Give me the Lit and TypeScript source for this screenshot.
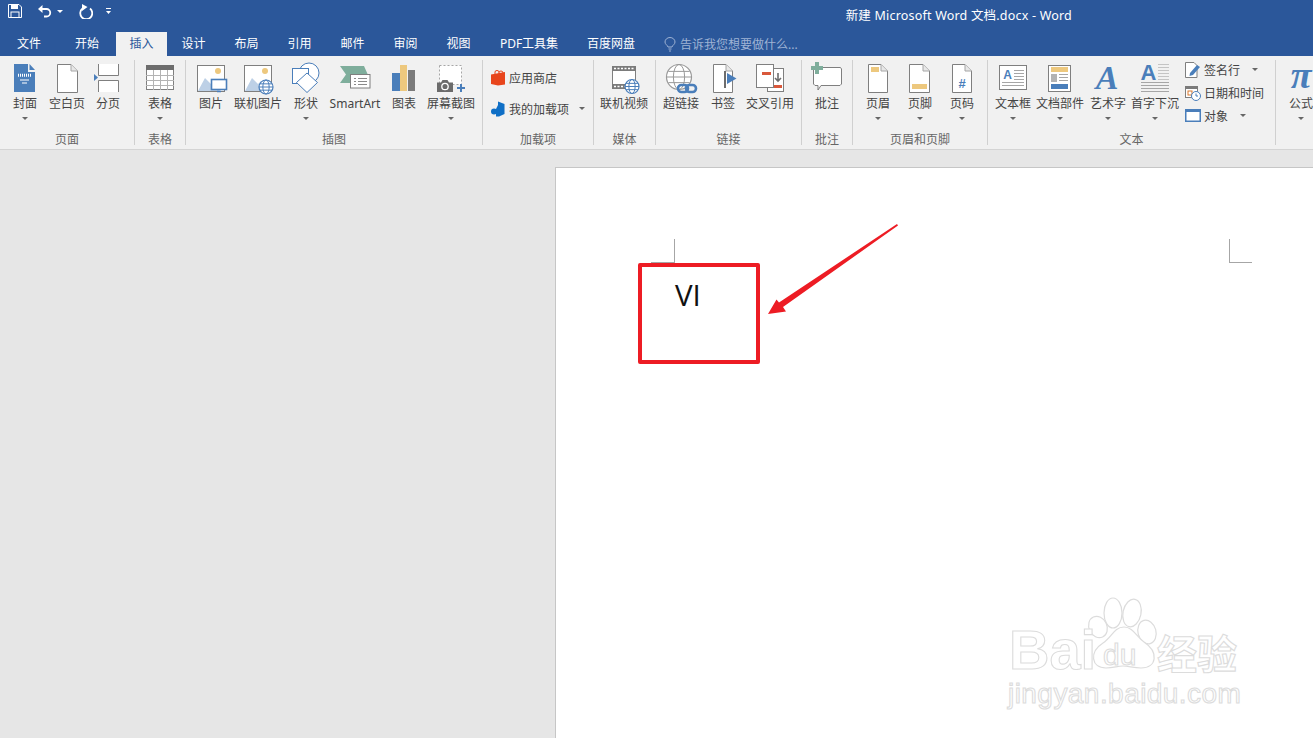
import { LitElement, html, css, svg } from "lit";
import { customElement } from "lit/decorators.js";

const BLUE = "#4a7eba";
const GRAY = "#7f7f7f";
const YEL = "#edc87e";
const GREEN = "#7fae9c";
const RED = "#d9583b";

const doc = (x: number, w: number, fill = "#fff") => svg`
  <path d="M${x + .5} 4.5H${x + w - 7}L${x + w - .5} 11V32.5H${x + .5}Z" fill="${fill}" stroke="${GRAY}"/>
  <path d="M${x + w - 7} 4.5V11H${x + w - .5}" fill="#e8e8e8" stroke="#a6a6a6"/>`;

const globe = (cx: number, cy: number, r: number, c = BLUE) => svg`
  <circle cx="${cx}" cy="${cy}" r="${r}" fill="#fff" stroke="${c}" stroke-width="1.2"/>
  <ellipse cx="${cx}" cy="${cy}" rx="${r * .45}" ry="${r}" fill="none" stroke="${c}"/>
  <path d="M${cx - r} ${cy}H${cx + r}M${cx - r * .85} ${cy - r * .45}H${cx + r * .85}M${cx - r * .85} ${cy + r * .45}H${cx + r * .85}" stroke="${c}" fill="none"/>`;

const picture = svg`
  <rect x="8.5" y="5.5" width="27" height="26" fill="#fff" stroke="${GRAY}"/>
  <circle cx="29" cy="11" r="3" fill="${YEL}"/>
  <path d="M9 31L16 18L22 24L25 21L31 31Z" fill="#bdd0e6"/>`;

const lines = (x1: number, x2: number, ys: number[], c = "#a6a6a6") =>
  svg`<path d="${ys.map((y) => `M${x1} ${y + .5}H${x2}`).join("")}" stroke="${c}" fill="none"/>`;

const ICONS: Record<string, unknown> = {
  cover: svg`<path d="M11 4H25V12H32V32H11Z" fill="${BLUE}"/><path d="M26.5 4L32 10H26.5Z" fill="${BLUE}"/>
    <path d="M15 14.5H28M15 16H28" stroke="#fff" stroke-dasharray="1 1" stroke-width="1.4"/>
    <path d="M17 20H26M19 23H24" stroke="#fff"/>`,
  blank: doc(12, 21),
  pagebreak: svg`<path d="M12.5 4V15.5H32.5V4M12.5 32V20.5H32.5V32" fill="#fff" stroke="${GRAY}"/>
    <path d="M8 14L12 17.5L8 21Z" fill="${BLUE}"/>`,
  table: svg`<rect x="8.5" y="5.5" width="27" height="24" fill="#fff" stroke="${GRAY}"/>
    <rect x="8" y="5" width="28" height="5" fill="#6d6d6d"/>
    <path d="M8 15.5H36M8 20.5H36M8 25.5H36M15.5 10V30M22.5 10V30M29.5 10V30" stroke="#b3b3b3" fill="none"/>`,
  picture: svg`${picture}
    <rect x="22.5" y="19.5" width="15" height="10" fill="#fff" stroke="${BLUE}" stroke-width="1.6"/>
    <path d="M28 31.5H32" stroke="${BLUE}" stroke-width="1.5"/>`,
  online: svg`${picture}${globe(30, 27, 7)}`,
  shapes: svg`<circle cx="25" cy="13" r="10" fill="#fff" stroke="${BLUE}"/>
    <rect x="8.5" y="8.5" width="16" height="15" fill="#fff" stroke="${BLUE}"/>
    <path d="M23 13L33.5 22.5L23 32.5L12.5 22.5Z" fill="#fff" stroke="${BLUE}"/>`,
  smartart: svg`<path d="M7 6H31L35 15V23H7L13 14.5Z" fill="${GREEN}"/>
    <rect x="17.5" y="14.5" width="19.5" height="13.5" fill="#fff" stroke="${GRAY}"/>
    <path d="M21 18.5H23M25 18.5H34M21 21.5H23M25 21.5H34M21 24.5H23M25 24.5H34" stroke="#8a8a8a"/>`,
  chart: svg`<rect x="10" y="13" width="8" height="18" fill="${BLUE}"/>
    <rect x="18" y="5" width="7" height="26" fill="${YEL}"/>
    <rect x="26" y="10" width="7" height="21" fill="#7b7b7b"/>`,
  screenshot: svg`<rect x="10.5" y="5.5" width="22" height="19" fill="#fff" stroke="#a6a6a6" stroke-dasharray="2 2"/>
    <path d="M8 22.5H12L13.5 20H18.5L20 22.5H24V32H8Z" fill="#6b6b6b"/>
    <circle cx="16" cy="26.5" r="3.2" fill="#6b6b6b" stroke="#fff" stroke-width="1.3"/>
    <path d="M28 28H36M32 24V32" stroke="${BLUE}" stroke-width="2"/>`,
  video: svg`<rect x="10.5" y="6.5" width="23" height="22" fill="#fff" stroke="${GRAY}"/>
    <rect x="10" y="6" width="24" height="5" fill="#7b7b7b"/><rect x="10" y="24" width="14" height="5" fill="#7b7b7b"/>
    <path d="M12 8.5H33M12 26.5H24" stroke="#fff" stroke-dasharray="2 1.5" stroke-width="1.5"/>${globe(30, 26.5, 7)}`,
  link: svg`${globe(20, 17, 12.5, "#999")}
    <rect x="19" y="25" width="10" height="7" rx="3.5" fill="none" stroke="${BLUE}" stroke-width="2.6"/>
    <rect x="27" y="25" width="10" height="7" rx="3.5" fill="none" stroke="${BLUE}" stroke-width="2.6"/>`,
  bookmark: svg`${doc(12, 20)}<rect x="23" y="11" width="2" height="17" fill="#6d6d6d"/>
    <path d="M26 13L35.5 18.5L26 24Z" fill="${BLUE}"/>`,
  crossref: svg`<rect x="19.5" y="8.5" width="16" height="23" fill="#fff" stroke="${GRAY}"/>
    <rect x="8.5" y="4.5" width="17" height="23" fill="#fff" stroke="${GRAY}"/>
    <rect x="14" y="12" width="9" height="3" fill="${RED}"/><rect x="26" y="25" width="8" height="3" fill="${RED}"/>
    <path d="M30 13V20M27 18L30 21L33 18" fill="none" stroke="#6d6d6d" stroke-width="1.6"/>`,
  comment: svg`<path d="M9.5 7.5H35.5L36.5 9V24L35 25.5H16L13 30V25.5H10L8.5 24V9Z" fill="#fff" stroke="${GRAY}"/>
    <path d="M10 2H14V6H18V10H14V14H10V10H6V6H10Z" fill="${GREEN}"/>`,
  header: svg`${doc(12, 20)}<rect x="15" y="7" width="8" height="5" fill="${YEL}"/>`,
  footer: svg`${doc(11, 21)}<rect x="14" y="24" width="15" height="5" fill="${YEL}"/>`,
  pagenum: svg`${doc(12, 20)}<text x="22" y="28" text-anchor="middle" font-size="13" font-weight="700" font-family="Liberation Sans" fill="${BLUE}">#</text>`,
  textbox: svg`<rect x="8.5" y="5.5" width="27" height="24" fill="#fff" stroke="${GRAY}"/>
    <text x="16.5" y="19" text-anchor="middle" font-size="12" font-weight="700" font-family="Liberation Sans" fill="${BLUE}">A</text>
    ${lines(23, 33, [10, 13, 16, 19])}${lines(11, 33, [22, 25])}`,
  parts: svg`<rect x="10.5" y="5.5" width="22" height="26" fill="#fff" stroke="${GRAY}"/>
    <rect x="13" y="7" width="17" height="5" fill="${YEL}"/><rect x="13" y="14" width="6" height="8" fill="#b3b3b3"/>
    ${lines(21, 30, [14, 17, 20])}<rect x="13" y="24" width="17" height="5" fill="${BLUE}"/>`,
  wordart: svg`<text x="21" y="29" text-anchor="middle" font-size="34" font-weight="700" font-style="italic" font-family="Liberation Serif" fill="${BLUE}">A</text>`,
  dropcap: svg`<text x="15.5" y="20" text-anchor="middle" font-size="22" font-weight="700" font-family="Liberation Sans" fill="${BLUE}">A</text>
    ${lines(25, 36, [4, 7, 10, 13, 16, 19], "#c4c4c4")}${lines(8, 36, [22, 25, 28, 31], "#a6a6a6")}`,
  pi: svg`<text x="22" y="28" text-anchor="middle" font-size="38" font-weight="700" font-style="italic" font-family="Liberation Serif" fill="${BLUE}">π</text>`,
};

const SMALL: Record<string, unknown> = {
  store: svg`<path d="M0 4.5L14 2V14.5L7 15.5L0 14Z" fill="#e8451c"/><path d="M4 4V2Q4 .5 6 .5T8 2V4M8 2.5Q8 1 10 1T12 3" fill="none" stroke="#e8451c"/>`,
  addin: svg`<path d="M7 .5L13.5 3V13L8 15.5H5V8L7 4Z" fill="#0f6fc6"/><circle cx="3" cy="10.5" r="3" fill="#0f6fc6"/>`,
  sign: svg`<path d="M.5 .5H9L12 3.5V15.5H.5Z" fill="#fff" stroke="${GRAY}"/><path d="M5 11L12 3L15 5L8 13L4.5 14Z" fill="${BLUE}"/>`,
  date: svg`<rect x=".5" y="1.5" width="12" height="11" fill="#fff" stroke="${GRAY}"/><rect x="0" y="1" width="13" height="3" fill="#7b7b7b"/>
    <rect x="3" y="6" width="4" height="4" fill="#fff" stroke="#d9782d"/><circle cx="11" cy="11" r="4.5" fill="#fff" stroke="${BLUE}"/><path d="M11 8.5V11H13" fill="none" stroke="${BLUE}"/>`,
  object: svg`<rect x=".75" y="1.75" width="14.5" height="11.5" fill="#fff" stroke="${BLUE}" stroke-width="1.5"/><rect x="0" y="1" width="16" height="3" fill="${BLUE}"/>`,
};

interface Btn { label: string; icon: string; w: number; caret?: boolean }
interface Small { label: string; icon: string; caret?: boolean; gap?: number }
interface Group { label: string; w: number; pad: number; btns: Btn[]; small?: Small[]; smallPad?: number; smallTop?: number; rowH?: number; iconGap?: number }

const GROUPS: Group[] = [
  { label: "页面", w: 135, pad: 4, btns: [
    { label: "封面", icon: "cover", w: 42, caret: true },
    { label: "空白页", icon: "blank", w: 42 },
    { label: "分页", icon: "pagebreak", w: 40 } ] },
  { label: "表格", w: 51, pad: 1, btns: [{ label: "表格", icon: "table", w: 48, caret: true }] },
  { label: "插图", w: 297, pad: 4, btns: [
    { label: "图片", icon: "picture", w: 42 },
    { label: "联机图片", icon: "online", w: 52 },
    { label: "形状", icon: "shapes", w: 44, caret: true },
    { label: "SmartArt", icon: "smartart", w: 54 },
    { label: "图表", icon: "chart", w: 44 },
    { label: "屏幕截图", icon: "screenshot", w: 50, caret: true } ] },
  { label: "加载项", w: 111, pad: 8, btns: [], rowH: 31, smallPad: 0, smallTop: 2, iconGap: 2, small: [
    { label: "应用商店", icon: "store" },
    { label: "我的加载项", icon: "addin", caret: true, gap: 10 } ] },
  { label: "媒体", w: 62, pad: 2, btns: [{ label: "联机视频", icon: "video", w: 56 }] },
  { label: "链接", w: 146, pad: 2, btns: [
    { label: "超链接", icon: "link", w: 46 },
    { label: "书签", icon: "bookmark", w: 38 },
    { label: "交叉引用", icon: "crossref", w: 56 } ] },
  { label: "批注", w: 51, pad: 2, btns: [{ label: "批注", icon: "comment", w: 46 }] },
  { label: "页眉和页脚", w: 135, pad: 4, btns: [
    { label: "页眉", icon: "header", w: 42, caret: true },
    { label: "页脚", icon: "footer", w: 42, caret: true },
    { label: "页码", icon: "pagenum", w: 42, caret: true } ] },
  { label: "文本", w: 288, pad: 2, btns: [
    { label: "文本框", icon: "textbox", w: 46, caret: true },
    { label: "文档部件", icon: "parts", w: 48, caret: true },
    { label: "艺术字", icon: "wordart", w: 48, caret: true },
    { label: "首字下沉", icon: "dropcap", w: 46, caret: true } ],
    rowH: 23, smallPad: 7, smallTop: -2, iconGap: 3, small: [
    { label: "签名行", icon: "sign", caret: true, gap: 12 },
    { label: "日期和时间", icon: "date" },
    { label: "对象", icon: "object", caret: true, gap: 12 } ] },
  { label: "", w: 60, pad: 0, btns: [{ label: "公式", icon: "pi", w: 50, caret: true }] },
];

const TABS = [
  { t: "文件", w: 58 }, { t: "开始", w: 58 }, { t: "插入", w: 51, on: true }, { t: "设计", w: 53 },
  { t: "布局", w: 53 }, { t: "引用", w: 53 }, { t: "邮件", w: 53 }, { t: "审阅", w: 53 },
  { t: "视图", w: 53 }, { t: "PDF工具集", w: 88 }, { t: "百度网盘", w: 76 },
];

@customElement("app-root")
export class AppRoot extends LitElement {
  static styles = css`
    :host {
      width: 1313px; height: 738px; overflow: hidden; background: #e6e6e6;
      font-family: "Noto Sans", "Noto Sans CJK SC", sans-serif; font-size: 12px; color: #444;
      display: flex; flex-direction: column;
    }
    .title { flex: none; height: 32px; background: #2b579a; color: #fff; display: flex; align-items: flex-start; }
    .qat { display: flex; align-items: center; padding: 4px 0 0 8px; height: 14px; }
    .qat svg { display: block; }
    .qat .undo { margin-left: 15px; }
    .qat .dd { margin-left: 5px; }
    .qat .redo { margin-left: 15px; }
    .qat .cust { margin-left: 12px; }
    .doc-title { margin-left: auto; margin-right: 241px; padding-top: 7px; line-height: 18px; font-size: 12.5px; letter-spacing: .2px; white-space: nowrap; }
    .tabs { flex: none; height: 24px; background: #2b579a; color: #fff; display: flex; align-items: stretch; }
    .tab { flex: none; display: flex; align-items: center; justify-content: center; line-height: 1; white-space: nowrap; box-sizing: border-box; }
    .tab.on { background: #f1f1f1; color: #2b579a; }
    .tell { display: flex; align-items: center; gap: 4px; margin-left: 15px; color: #9fb3d4; }
    .ribbon { flex: none; height: 94px; box-sizing: border-box; background: #f1f1f1; border-bottom: 1px solid #d4d4d4; display: flex; padding-top: 4px; }
    .group { flex: none; box-sizing: border-box; height: 85px; border-right: 1px solid #d0d0d0; display: flex; flex-direction: column; }
    .group.last { border-right: 0; }
    .items { flex: 1; display: flex; align-items: flex-start; min-height: 0; }
    .btn { flex: none; display: flex; flex-direction: column; align-items: center; }
    .btn svg { flex: none; display: block; }
    .btn .lb { line-height: 16px; height: 16px; margin-top: 2px; white-space: nowrap; }
    .caret { width: 0; height: 0; border: 3px solid transparent; border-top: 3px solid #666; border-bottom: 0; }
    .btn .caret { margin-top: 5px; }
    .smalls { flex: none; display: flex; flex-direction: column; }
    .sm { display: flex; align-items: center; white-space: nowrap; }
    .sm svg { flex: none; width: 16px; height: 16px; display: block; }
    .sm .caret { flex: none; }
    .glabel { flex: none; height: 16px; line-height: 16px; text-align: center; color: #666; margin-bottom: -3px; }
    .work { flex: 1; min-height: 0; display: flex; padding: 17px 0 0 555px; }
    .page { flex: 1; background: #fff; border: 1px solid #c6c6c6; border-width: 1px 0 0 1px; position: relative; }
    .mark { position: absolute; background: #a6a6a6; }
    .vl { width: 1px; height: 24px; top: 71px; }
    .hl { height: 1px; width: 23px; top: 94px; }
    .vi { position: absolute; left: 119px; top: 105px; font: 29.5px/44px "Open Sans", sans-serif; color: #111; }
    .redbox { position: absolute; left: 82px; top: 95px; width: 122px; height: 101px; box-sizing: border-box; border: 4.5px solid #ed1c24; border-radius: 2px; }
    .arrow { position: absolute; left: 0; top: 0; overflow: visible; pointer-events: none; }
    .wm { position: absolute; color: #fff; -webkit-text-stroke: 1.1px #dcdcdc; font-family: "Liberation Sans", "Noto Sans CJK SC", sans-serif; white-space: nowrap; }
    .wm-bai { left: 453px; top: 458px; font-size: 56px; line-height: 48px; font-weight: 700; }
    .wm-du { left: 547px; top: 472px; font-size: 30px; line-height: 30px; }
    .wm-zh { left: 601px; top: 462px; font-size: 40px; line-height: 44px; font-weight: 700; font-family: "Noto Sans CJK SC", sans-serif; }
    .wm-jy { left: 452px; top: 510px; font-size: 28px; line-height: 32px; letter-spacing: .45px; }
    .paw { position: absolute; left: 525px; top: 428px; overflow: visible; }
  `;

  private renderBtn(b: Btn) {
    return html`<div class="btn" style="width:${b.w}px">
      <svg width="44" height="34" viewBox="0 0 44 34" style="overflow:visible">${ICONS[b.icon]}</svg>
      <div class="lb">${b.label}</div>
      ${b.caret ? html`<div class="caret"></div>` : ""}
    </div>`;
  }

  private renderSmall(g: Group) {
    return html`<div class="smalls" style="padding-left:${g.smallPad}px;margin-top:${g.smallTop}px">
      ${g.small!.map((s) => html`<div class="sm" style="height:${g.rowH}px;gap:${g.iconGap}px">
        <svg viewBox="0 0 16 16" style="overflow:visible">${SMALL[s.icon]}</svg>
        <span>${s.label}</span>
        ${s.caret ? html`<div class="caret" style="margin-left:${s.gap! - g.iconGap!}px"></div>` : ""}
      </div>`)}
    </div>`;
  }

  render() {
    return html`
      <div class="title">
        <div class="qat">
          <svg width="14" height="14" viewBox="0 0 14 14"><path d="M.5.5H11L13.5 3V13.5H.5Z" fill="none" stroke="#fff"/><rect x="3" y="1" width="7" height="4" fill="#fff"/><rect x="3" y="8" width="8" height="5.5" fill="none" stroke="#fff"/></svg>
          <svg class="undo" width="15" height="14" viewBox="0 0 15 14"><path d="M2 5H9.5A3.7 3.7 0 0 1 9.5 12.5H7" fill="none" stroke="#fff" stroke-width="1.8"/><path d="M5.5 1V9L1 5Z" fill="#fff"/></svg>
          <div class="caret dd" style="border-top-color:#fff"></div>
          <svg class="redo" width="15" height="15" viewBox="0 0 15 15"><path d="M4.5 3.5A6 6 0 1 0 12 3.5" fill="none" stroke="#fff" stroke-width="1.8" transform="translate(0 1)"/><path d="M4 0V7L9.5 3Z" fill="#fff"/></svg>
          <svg class="cust" width="7" height="8" viewBox="0 0 7 8"><path d="M1 1.5H6" stroke="#fff"/><path d="M1 4H6L3.5 7Z" fill="#fff"/></svg>
        </div>
        <div class="doc-title">新建 Microsoft Word 文档.docx - Word</div>
      </div>
      <div class="tabs">
        ${TABS.map((t) => html`<div class="tab ${t.on ? "on" : ""}" style="width:${t.w}px">${t.t}</div>`)}
        <div class="tell">
          <svg width="12" height="15" viewBox="0 0 12 15"><path d="M4 10C3.5 8 1 7.5 1 5A5 4.5 0 0 1 11 5C11 7.5 8.5 8 8 10Z" fill="none" stroke="#9fb3d4"/><path d="M4.5 12H7.5M5 14H7" stroke="#9fb3d4"/></svg>
          <span>告诉我您想要做什么...</span>
        </div>
      </div>
      <div class="ribbon">
        ${GROUPS.map((g) => html`<div class="group ${g.label ? "" : "last"}" style="width:${g.w}px">
          <div class="items" style="padding-left:${g.pad}px">
            ${g.btns.map((b) => this.renderBtn(b))}
            ${g.small ? this.renderSmall(g) : ""}
          </div>
          <div class="glabel">${g.label}</div>
        </div>`)}
      </div>
      <div class="work">
        <div class="page">
          <div class="mark vl" style="left:118px"></div>
          <div class="mark hl" style="left:95px"></div>
          <div class="mark vl" style="left:673px"></div>
          <div class="mark hl" style="left:673px"></div>
          <div class="vi">VI</div>
          <div class="redbox"></div>
          <svg class="arrow" width="400" height="200"><path d="M212 146L220.5 131.5L223 134.5L341 56L342 57.5L227 139L230 143.5Z" fill="#ed1c24"/></svg>
          <svg class="paw" width="80" height="80" viewBox="0 0 80 80" fill="#fff" stroke="#dcdcdc" stroke-width="1.2">
            <ellipse cx="17" cy="31" rx="9" ry="11" transform="rotate(-25 17 31)"/>
            <ellipse cx="32" cy="17" rx="9" ry="15"/>
            <ellipse cx="51" cy="17" rx="9" ry="14" transform="rotate(12 51 17)"/>
            <ellipse cx="66" cy="36" rx="9" ry="12" transform="rotate(-15 66 36)"/>
            <path d="M43 31C52 31 55 40 63 46C78 56 76 72 60 72C52 72 48 70 42 70C36 70 33 72 25 72C10 72 8 56 22 47C31 41 33 31 43 31Z"/>
          </svg>
          <div class="wm wm-bai">Bai</div>
          <div class="wm wm-du">du</div>
          <div class="wm wm-zh">经验</div>
          <div class="wm wm-jy">jingyan.baidu.com</div>
        </div>
      </div>
    `;
  }
}
